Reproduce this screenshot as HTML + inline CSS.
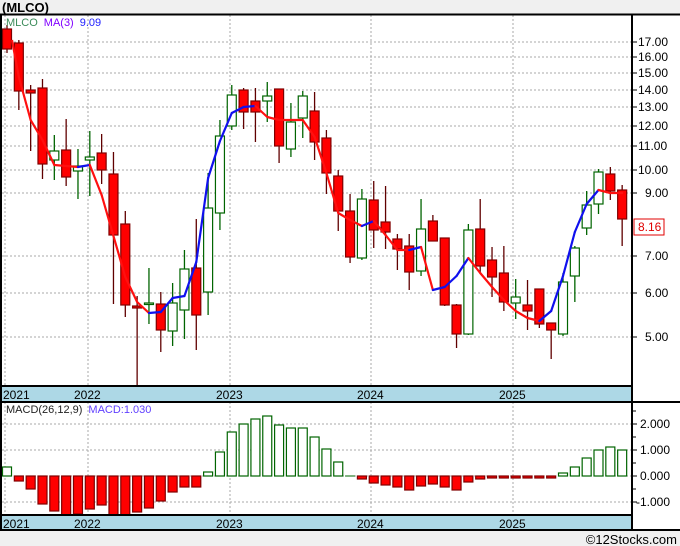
<!DOCTYPE html>
<html><head><meta charset="utf-8"><style>
html,body{margin:0;padding:0;background:#fff;}
body{width:680px;height:546px;overflow:hidden;position:relative;font-family:"Liberation Sans",sans-serif;}
svg{position:absolute;left:0;top:0;}
</style></head><body>
<svg id="s" width="680" height="546" xmlns="http://www.w3.org/2000/svg" font-family="Liberation Sans, sans-serif">
<rect x="0" y="0" width="680" height="546" fill="#fff"/>
<rect x="0" y="0" width="680" height="14" fill="#f0f0f0"/>
<text x="2" y="12" font-size="13" font-weight="bold" fill="#000">(MLCO)</text>
<rect x="0" y="530" width="680" height="16" fill="#f0f0f0"/>
<text x="677" y="544" font-size="13" text-anchor="end" fill="#000">©12Stocks.com</text>
<rect x="0" y="386" width="632" height="16" fill="#add8e6"/>
<rect x="0" y="515" width="632" height="15" fill="#add8e6"/>
<g id="grid"></g>
<g id="candles"></g>
<g id="ma"></g>
<g id="macd"></g>
<g stroke="#000" stroke-width="2" fill="none">
<line x1="0" y1="14.5" x2="680" y2="14.5"/>
<line x1="1" y1="14" x2="1" y2="530"/>
<line x1="632" y1="14" x2="632" y2="530"/>
<line x1="0" y1="386" x2="632" y2="386"/>
<line x1="0" y1="402" x2="680" y2="402"/>
<line x1="0" y1="515" x2="632" y2="515"/>
<line x1="0" y1="530" x2="680" y2="530"/>
</g>
<g font-size="12" fill="#000">
<text x="3" y="399">2021</text><text x="74" y="399">2022</text><text x="216" y="399">2023</text><text x="357" y="399">2024</text><text x="499" y="399">2025</text>
<text x="3" y="528">2021</text><text x="74" y="528">2022</text><text x="216" y="528">2023</text><text x="357" y="528">2024</text><text x="499" y="528">2025</text>
</g>
<g font-size="12" fill="#000">
<text x="638" y="46">17.00</text><text x="638" y="61">16.00</text><text x="638" y="77">15.00</text><text x="638" y="94">14.00</text><text x="638" y="111">13.00</text><text x="638" y="130">12.00</text><text x="638" y="150">11.00</text><text x="638" y="174">10.00</text><text x="645" y="197">9.00</text><text x="645" y="260">7.00</text><text x="645" y="297">6.00</text><text x="645" y="341">5.00</text>
<text x="640" y="428">2.000</text><text x="640" y="454">1.000</text><text x="640" y="480">0.000</text><text x="636" y="506">-1.000</text>
</g>
<rect x="634" y="219" width="30" height="16" fill="#fff" stroke="#e00000"/>
<text x="638" y="231" font-size="12" fill="#e00000">8.16</text>
<text x="6" y="26" font-size="11"><tspan fill="#3c8c5a">MLCO</tspan><tspan fill="#8000ff" dx="6">MA(3)</tspan><tspan fill="#2020ff" dx="6">9.09</tspan></text>
<text x="6" y="413" font-size="11"><tspan fill="#222">MACD(26,12,9)</tspan><tspan fill="#6040ff" dx="6">MACD:1.030</tspan></text>
</svg>
<script>
var NS="http://www.w3.org/2000/svg";
function el(p,t,a){var e=document.createElementNS(NS,t);for(var k in a)e.setAttribute(k,a[k]);document.getElementById(p).appendChild(e);return e;}
// grid
[42,57,73,90,107,126,146,170,193,256,293,337].forEach(function(y){el("grid","line",{x1:2,x2:632,y1:y,y2:y,stroke:"#aaa","stroke-dasharray":"2,2"});el("grid","line",{x1:632,x2:637,y1:y,y2:y,stroke:"#000"});});
[424,450,476,502].forEach(function(y){el("grid","line",{x1:2,x2:632,y1:y,y2:y,stroke:"#aaa","stroke-dasharray":"2,2"});el("grid","line",{x1:632,x2:637,y1:y,y2:y,stroke:"#000"});});
[411,437,463,489].forEach(function(y){el("grid","line",{x1:632,x2:636,y1:y,y2:y,stroke:"#000"});});
[5,88,230,371,513].forEach(function(x){el("grid","line",{x1:x,x2:x,y1:15,y2:386,stroke:"#aaa","stroke-dasharray":"2,2"});el("grid","line",{x1:x,x2:x,y1:402,y2:515,stroke:"#aaa","stroke-dasharray":"2,2"});});
// candles: [bodyTop, bodyBot, high, low, green?]
var C=[[29,49,25,53,0],[43,91,40,110,0],[90,93,85,151,0],[88,164,79,179,0],[151,160,135,180,1],[150,177,119,186,0],[166,171,149,199,1],[157,160,131,196,1],[153,170,134,184,0],[174,235,152,304,0],[224,305,211,317,0],[306,308,296,386,0],[303,304,268,324,1],[304,330,292,352,0],[303,331,283,346,1],[269,310,250,339,1],[268,315,219,350,0],[208,292,173,315,1],[136,213,120,230,1],[95,126,85,130,1],[90,112,88,129,0],[101,112,88,142,0],[96,101,82,122,1],[89,146,89,163,0],[122,149,103,157,1],[96,118,91,138,1],[111,142,92,160,0],[138,173,130,194,0],[176,211,170,231,0],[211,257,194,263,0],[199,258,189,260,1],[200,230,181,248,0],[222,232,186,249,0],[239,249,234,270,0],[246,272,234,290,0],[229,271,199,276,1],[221,241,215,241,0],[238,305,238,306,0],[305,334,304,348,0],[230,334,224,335,1],[229,266,199,272,0],[260,277,247,297,0],[273,302,246,311,0],[297,303,279,319,1],[305,311,280,330,0],[289,324,289,328,0],[323,330,323,359,0],[282,334,273,336,1],[248,276,246,302,1],[205,228,191,235,1],[172,204,169,214,1],[174,191,167,200,0],[190,219,185,246,0]];
var ma=[42,77,120,140,165,166,167,165,195,236,277,302,313,312,298,296,262,178,141,113,107,106,117,120,120,120,137,173,213,220,226,221,235,250,250,247,290,287,276,258,273,287,300,311,318,321,311,276,232,204,190,193,193];
function X(i){return 7+11.83*i;}
C.forEach(function(c,i){var x=X(i);var g=c[4];var sc=g?"#006400":"#600000";
el("candles","line",{x1:x,x2:x,y1:c[2],y2:c[3],stroke:sc,"stroke-width":1.3});
el("candles","rect",{x:x-4.5,y:c[0],width:9,height:Math.max(1.5,c[1]-c[0]),fill:g?"#fff":"#ff0000",stroke:g?"#006400":"#800000","stroke-width":1.2});});
for(var i=1;i<52;i++){var up=ma[i+1]<ma[i];el("ma","line",{x1:X(i),y1:ma[i],x2:X(i+1),y2:ma[i+1],stroke:up?"#1010ee":"#ff1010","stroke-width":2.2,"stroke-linecap":"round"});}
el("ma","line",{x1:12,y1:40,x2:X(1),y2:ma[1],stroke:"#ff1010","stroke-width":2.2});
var M=[467,481,489,504,511,515,514,509,505,515,515,512,508,501,492,487,487,472,452,432,424,419,416,425,428,428,437,449,462,476,479,483,485,487,490,486,484,487,490,482,479,478,478,478,478,478,478,473,467,458,450,447,450];
M=M.slice(0,53);
M.forEach(function(v,i){var x=X(i);var g=v<=476;
if(i==29){el("macd","line",{x1:x-5,x2:x+5,y1:476,y2:476,stroke:"#006400"});return;}
var y=Math.min(v,476),h=Math.abs(v-476);
el("macd","rect",{x:x-4.5,y:y,width:9,height:Math.max(1.5,h),fill:g?"#fff":"#ff0000",stroke:g?"#006400":"#800000","stroke-width":1.2});});
</script>
</body></html>
